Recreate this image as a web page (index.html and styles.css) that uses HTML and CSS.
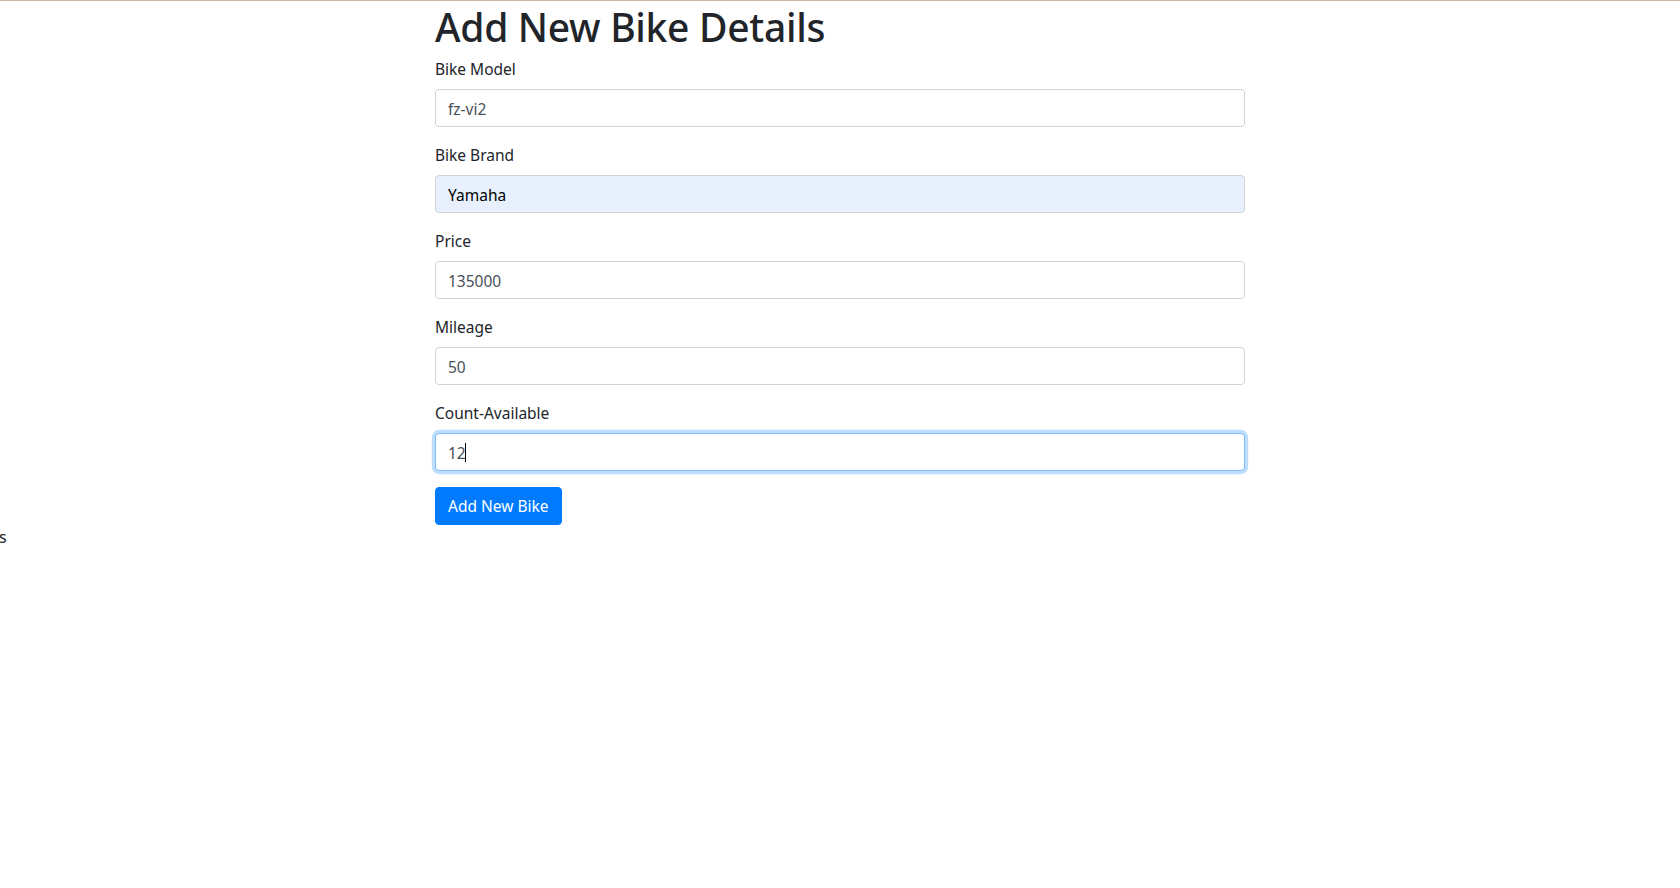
FILE: index.html
```html
<!DOCTYPE html>
<html lang="en">
<head>
<meta charset="utf-8">
<title>Add New Bike</title>
<link rel="stylesheet" href="styles.css">
</head>
<body>
<div class="topline"></div>
<main class="container">
  <h1 class="title">Add New Bike Details</h1>
  <form class="bike-form">
    <div class="form-group">
      <label class="form-label" for="model">Bike Model</label>
      <input class="form-control" id="model" type="text" value="fz-vi2">
    </div>
    <div class="form-group">
      <label class="form-label" for="brand">Bike Brand</label>
      <input class="form-control autofilled" id="brand" type="text" value="Yamaha">
    </div>
    <div class="form-group">
      <label class="form-label" for="price">Price</label>
      <input class="form-control" id="price" type="text" value="135000">
    </div>
    <div class="form-group">
      <label class="form-label" for="mileage">Mileage</label>
      <input class="form-control" id="mileage" type="text" value="50">
    </div>
    <div class="form-group">
      <label class="form-label" for="count">Count-Available</label>
      <div class="input-wrap">
        <input class="form-control focused" id="count" type="text" value="12">
        <span class="caret"></span>
      </div>
    </div>
    <button class="btn-primary" type="button">Add New Bike</button>
  </form>
</main>
<div class="stray">s</div>
</body>
</html>
```

FILE: styles.css
```css
* { box-sizing: border-box; }
html, body { margin: 0; padding: 0; background: #fff; }
body {
  font-family: "Noto Sans", "Open Sans", sans-serif;
  font-size: 16px;
  line-height: 1.5;
  color: #212529;
}
.topline {
  height: 1px;
  background: #c9b9a3;
}
.container {
  width: 810px;
  margin: 0 auto;
}
.title {
  margin: 0 0 8px 0;
  height: 48px;
  font-size: 39px;
  font-weight: 500;
  line-height: 52px;
  letter-spacing: -0.3px;
}
.bike-form { margin: 0; }
.form-group { margin-bottom: 16px; }
.form-label {
  display: block;
  height: 24px;
  margin-bottom: 8px;
  font-size: 15.5px;
  line-height: 24px;
}
.input-wrap { position: relative; }
.form-control {
  display: block;
  width: 100%;
  height: 38px;
  padding: 7px 12px 5px;
  font-family: inherit;
  font-size: 15.5px;
  line-height: 1.5;
  color: #495057;
  background: #fff;
  border: 1px solid #ced4da;
  border-radius: 4px;
  outline: none;
}
.autofilled {
  background: #e8f0fe;
  color: #000;
}
.focused {
  border-color: #80bdff;
  box-shadow: 0 0 0 3.2px rgba(0, 123, 255, 0.25);
}
.caret {
  position: absolute;
  left: 30px;
  top: 10px;
  width: 1px;
  height: 19px;
  background: #000;
}
.btn-primary {
  display: block;
  height: 38px;
  padding: 7px 12px 5px;
  font-family: inherit;
  font-size: 15.5px;
  line-height: 1.5;
  color: #fff;
  background: #007bff;
  border: 1px solid #007bff;
  border-radius: 4px;
  cursor: pointer;
}
.stray {
  font-size: 16px;
  line-height: 24px;
  margin-left: -1px;
}
```
